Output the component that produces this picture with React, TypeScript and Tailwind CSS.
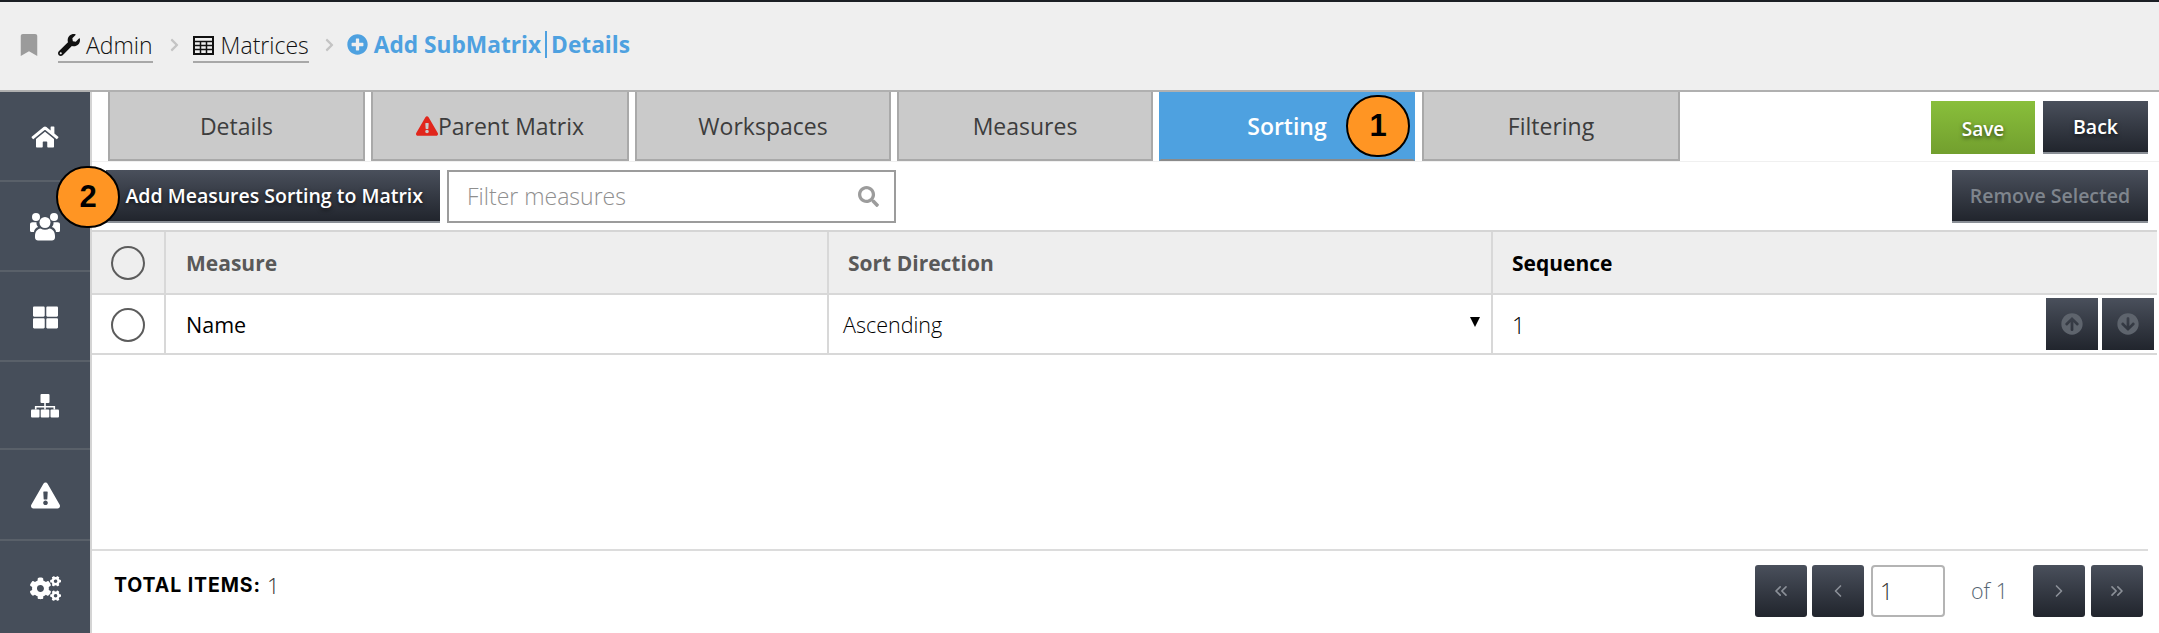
import React from "react";
import {
  FaBookmark, FaWrench, FaPlusCircle, FaChevronRight, FaHome, FaThLarge,
  FaExclamationTriangle, FaCogs, FaSearch, FaArrowCircleUp, FaArrowCircleDown,
} from "react-icons/fa";
import { LuChevronLeft, LuChevronRight, LuChevronsLeft, LuChevronsRight } from "react-icons/lu";

const dark = "bg-gradient-to-b from-[#4a505c] to-[#21252d]";
const shadow = "[text-shadow:0_2px_4px_rgba(0,0,0,0.6)]";

function Callout({ n, className }: { n: string; className: string }) {
  return (
    <div className={`absolute w-[64px] h-[62px] rounded-full bg-[#ff9523] border-2 border-black flex items-center justify-center text-[31px] font-bold text-black font-['Liberation_Sans',sans-serif] ${className}`}>
      {n}
    </div>
  );
}

function Tab({ label, w, active, warn }: { label: string; w: string; active?: boolean; warn?: boolean }) {
  return (
    <div className={`${w} h-[69px] flex items-center justify-center pt-[1px] text-[23px] border-2 border-t-0 ${active ? "bg-[#4ea1e0] text-white font-semibold border-[#4ea1e0] border-b-[#8a8a8a]" : "bg-[#cacaca] text-[#3d3d3d] border-[#a9a9a9]"}`}>
      {warn && <FaExclamationTriangle className="text-[#e1261c] w-[22px] h-[22px]" />}
      {label}
    </div>
  );
}

function PageBtn({ children }: { children: React.ReactNode }) {
  return <div className={`w-[52px] h-[52px] rounded-[3px] ${dark} flex items-center justify-center text-[#8b9098]`}>{children}</div>;
}

function Radio() {
  return <div className="w-[34px] h-[34px] mt-[1px] rounded-full border-[2.5px] border-[#5c5c5c]" />;
}

function TableIcon() {
  return (
    <svg viewBox="0 0 21 19" className="w-[21px] h-[19px] mr-[7px]" fill="none" stroke="currentColor">
      <rect x="1" y="1" width="19" height="17" strokeWidth="2" />
      <path d="M1 5.5h19M1 9.5h19M1 13.5h19M7.5 5v13M13.5 5v13" strokeWidth="1.5" />
    </svg>
  );
}

function UsersIcon() {
  return (
    <svg viewBox="0 0 30 28" className="w-[30px] h-[28px]" fill="currentColor">
      <circle cx="6" cy="4" r="4" />
      <circle cx="24" cy="4" r="4" />
      <path d="M0 11.5C0 10 1 9.2 2.5 9.2h4c-.2 2 .5 3.6 1.6 4.8C5.5 15 4.3 16.5 4 19H1.5C.5 19 0 18.3 0 17.5z" />
      <path d="M30 11.5C30 10 29 9.2 27.5 9.2h-4c.2 2-.5 3.6-1.6 4.8 2.6 1 3.8 2.5 4.1 5h2.5c1 0 1.5-.7 1.5-1.5z" />
      <circle cx="15" cy="9.5" r="5.5" />
      <path d="M5 23c0-4.500 2.500-7 5.500-7.500 2.800 1.600 6.200 1.600 9 0C22.500 16 25 18.500 25 23v1.500c0 2-1.500 3-3 3H8c-1.500 0-3-1-3-3z" />
    </svg>
  );
}

function SitemapIcon() {
  return (
    <svg viewBox="0 0 28 24" className="w-[28px] h-[24px]" fill="currentColor">
      <rect x="9.500" y="0" width="9" height="9" rx="1" />
      <rect x="0" y="15.500" width="8.500" height="8" rx="1" />
      <rect x="9.700" y="15.500" width="8.600" height="8" rx="1" />
      <rect x="19.500" y="15.500" width="8.500" height="8" rx="1" />
      <path d="M13.200 9h1.600v3h9.300v3.500h-1.600V13.500h-7.700v2h-1.600v-2H5.500v2H3.900V12h9.300z" />
    </svg>
  );
}

const nav = [
  { Icon: <FaHome className="w-[28px] h-[24px]" />, h: "h-[90px]" },
  { Icon: <UsersIcon />, h: "h-[90px]" },
  { Icon: <FaThLarge className="w-[27px] h-[25px]" />, h: "h-[90px]" },
  { Icon: <SitemapIcon />, h: "h-[88px]" },
  { Icon: <FaExclamationTriangle className="w-[29px] h-[27px]" />, h: "h-[91px]" },
  { Icon: <FaCogs className="w-[31px] h-[29px]" />, h: "flex-1" },
];

export default function App() {
  return (
    <div className="w-[2159px] h-[633px] overflow-hidden bg-white relative flex flex-col font-['Open_Sans',sans-serif] text-black">
      <header className="h-[92px] shrink-0 border-t-2 border-t-[#1b1f24] border-b-2 border-b-[#b0b0b0] bg-[#efefef] flex items-center pl-[20px] pb-[2px] text-[23px] font-light">
        <FaBookmark className="w-[18px] h-[22px] text-[#9b9b9b]" />
        <div className="ml-[20px] flex items-center border-b-2 border-[#a8a8a8] h-[36px] pt-[2px] text-[#111]">
          <FaWrench className="w-[22px] h-[22px] mr-[6px]" />
          Admin
        </div>
        <FaChevronRight className="ml-[17px] w-[9px] h-[16px] text-[#c4c4c4]" />
        <div className="ml-[14px] flex items-center border-b-2 border-[#a8a8a8] h-[36px] pt-[2px] text-[#111]">
          <TableIcon />
          Matrices
        </div>
        <FaChevronRight className="ml-[16px] w-[9px] h-[16px] text-[#c4c4c4]" />
        <div className="ml-[13px] flex items-center text-[#4ea1e0] text-[22.7px] font-bold">
          <FaPlusCircle className="w-[21px] h-[21px] mr-[6px]" />
          Add SubMatrix
          <span className="mx-[4px] w-[2px] h-[27px] bg-[#4ea1e0]" />
          Details
        </div>
      </header>

      <div className="flex-1 flex min-h-0">
        <nav className="w-[92px] shrink-0 bg-[#464e5a] border-r-2 border-[#d4d4d4] flex flex-col">
          {nav.map(({ Icon, h }, i) => (
            <div key={i} className={`${h} pt-[2px] flex items-center justify-center text-white ${i < 5 ? "border-b-2 border-[#596069]" : ""}`}>
              {Icon}
            </div>
          ))}
        </nav>

        <main className="flex-1 min-w-0 flex flex-col">
          <div className="h-[70px] shrink-0 flex border-b border-[#f0f0f0] pl-[16px] pr-[11px]">
            <div className="flex gap-[6px] h-[69px]">
              <Tab label="Details" w="w-[257px]" />
              <Tab label="Parent Matrix" w="w-[258px]" warn />
              <Tab label="Workspaces" w="w-[256px]" />
              <Tab label="Measures" w="w-[256px]" />
              <Tab label="Sorting" w="w-[256px]" active />
              <div className="ml-[1px]"><Tab label="Filtering" w="w-[258px]" /></div>
            </div>
            <div className="ml-auto flex gap-[8px] pt-[9px]">
              <div className={`w-[104px] h-[53px] pt-[4px] flex items-center justify-center bg-gradient-to-b from-[#89bf3b] to-[#729f2e] text-white text-[19px] font-semibold ${shadow}`}>Save</div>
              <div className={`w-[105px] h-[53px] flex items-center justify-center ${dark} border-b-2 border-[#8a8f96] text-white text-[19.5px] font-semibold ${shadow}`}>Back</div>
            </div>
          </div>

          <div className="h-[68px] shrink-0 flex items-start pt-[8px] pl-[14px] pr-[11px]">
            <div className={`w-[334px] h-[53px] flex items-center justify-end pr-[17px] ${dark} border-b-2 border-[#8a8f96] text-white text-[19.5px] font-semibold ${shadow}`}>
              Add Measures Sorting to Matrix
            </div>
            <div className="ml-[7px] w-[449px] h-[53px] border-2 border-[#9c9c9c] flex items-center pl-[18px] pr-[15px] text-[23px] font-light text-[#8f8f8f]">
              <span className="flex-1">Filter measures</span>
              <FaSearch className="w-[21px] h-[21px] text-[#9c9c9c]" />
            </div>
            <div className={`ml-auto w-[196px] h-[53px] flex items-center justify-center ${dark} border-b-2 border-[#8a8f96] text-[#7f858d] text-[19.5px] font-semibold`}>
              Remove Selected
            </div>
          </div>

          <div className="mr-[2px] border-t-2 border-[#d5d5d5] grid grid-cols-[74px_663px_664px_1fr]">
            <div className="h-[63px] bg-[#eeeeee] border-b-2 border-r-2 border-[#d8d8d8] flex items-center justify-center"><Radio /></div>
            <div className="h-[63px] bg-[#eeeeee] border-b-2 border-r-2 border-[#d8d8d8] flex items-center pl-[20px] pt-[2px] text-[21px] font-bold text-[#595959]">Measure</div>
            <div className="h-[63px] bg-[#eeeeee] border-b-2 border-r-2 border-[#d8d8d8] flex items-center pl-[19px] pt-[2px] text-[21px] font-bold text-[#595959]">Sort Direction</div>
            <div className="h-[63px] bg-[#eeeeee] border-b-2 border-[#d8d8d8] flex items-center pl-[19px] pt-[2px] text-[21px] font-bold">Sequence</div>
            <div className="h-[60px] border-b-2 border-r-2 border-[#d8d8d8] flex items-center justify-center"><Radio /></div>
            <div className="h-[60px] border-b-2 border-r-2 border-[#d8d8d8] flex items-center pl-[20px] pt-[2px] text-[21.5px] font-normal">Name</div>
            <div className="h-[60px] border-b-2 border-r-2 border-[#d8d8d8] flex items-center pl-[14px] pr-[11px] pt-[2px] text-[21.5px] font-light justify-between">
              <span>Ascending</span>
              <span className="w-0 h-0 border-l-[5px] border-r-[5px] border-t-[10px] border-l-transparent border-r-transparent border-t-black -mt-[6px]" />
            </div>
            <div className="h-[60px] border-b-2 border-[#d8d8d8] flex items-center pl-[19px] pr-[3px] text-[23px] font-light">
              <span className="flex-1 pt-[2px]">1</span>
              <div className="flex gap-[4px]">
                <div className={`w-[52px] h-[52px] ${dark} flex items-center justify-center text-[#5e646d]`}><FaArrowCircleUp className="w-[22px] h-[22px]" /></div>
                <div className={`w-[52px] h-[52px] ${dark} flex items-center justify-center text-[#5e646d]`}><FaArrowCircleDown className="w-[22px] h-[22px]" /></div>
              </div>
            </div>
          </div>

          <div className="flex-1 min-h-0 flex flex-col justify-end">
            <div className="h-[84px] mr-[11px] border-t-2 border-[#dcdcdc] flex items-center pl-[22px] pb-[2px]">
              <span className="text-[19.5px] font-bold tracking-[0.9px] font-['Inter',sans-serif] mr-[6px] -mt-[11px]">TOTAL ITEMS:</span>
              <span className="text-[22px] font-light text-[#333] -mt-[11px]">1</span>
              <div className="ml-auto flex items-center pr-[5px]">
                <PageBtn><LuChevronsLeft className="w-[20px] h-[20px]" /></PageBtn>
                <div className="ml-[5px]"><PageBtn><LuChevronLeft className="w-[20px] h-[20px]" /></PageBtn></div>
                <div className="ml-[7px] w-[74px] h-[52px] rounded-[4px] border-2 border-[#b4b4b4] flex items-center pl-[7px] text-[23px] font-light text-[#333]">1</div>
                <span className="ml-[26px] w-[62px] text-[21.5px] font-light text-[#566472]">of 1</span>
                <PageBtn><LuChevronRight className="w-[20px] h-[20px]" /></PageBtn>
                <div className="ml-[6px]"><PageBtn><LuChevronsRight className="w-[20px] h-[20px]" /></PageBtn></div>
              </div>
            </div>
          </div>
        </main>
      </div>

      <Callout n="1" className="left-[1346px] top-[95px]" />
      <Callout n="2" className="left-[56px] top-[166px]" />
    </div>
  );
}
